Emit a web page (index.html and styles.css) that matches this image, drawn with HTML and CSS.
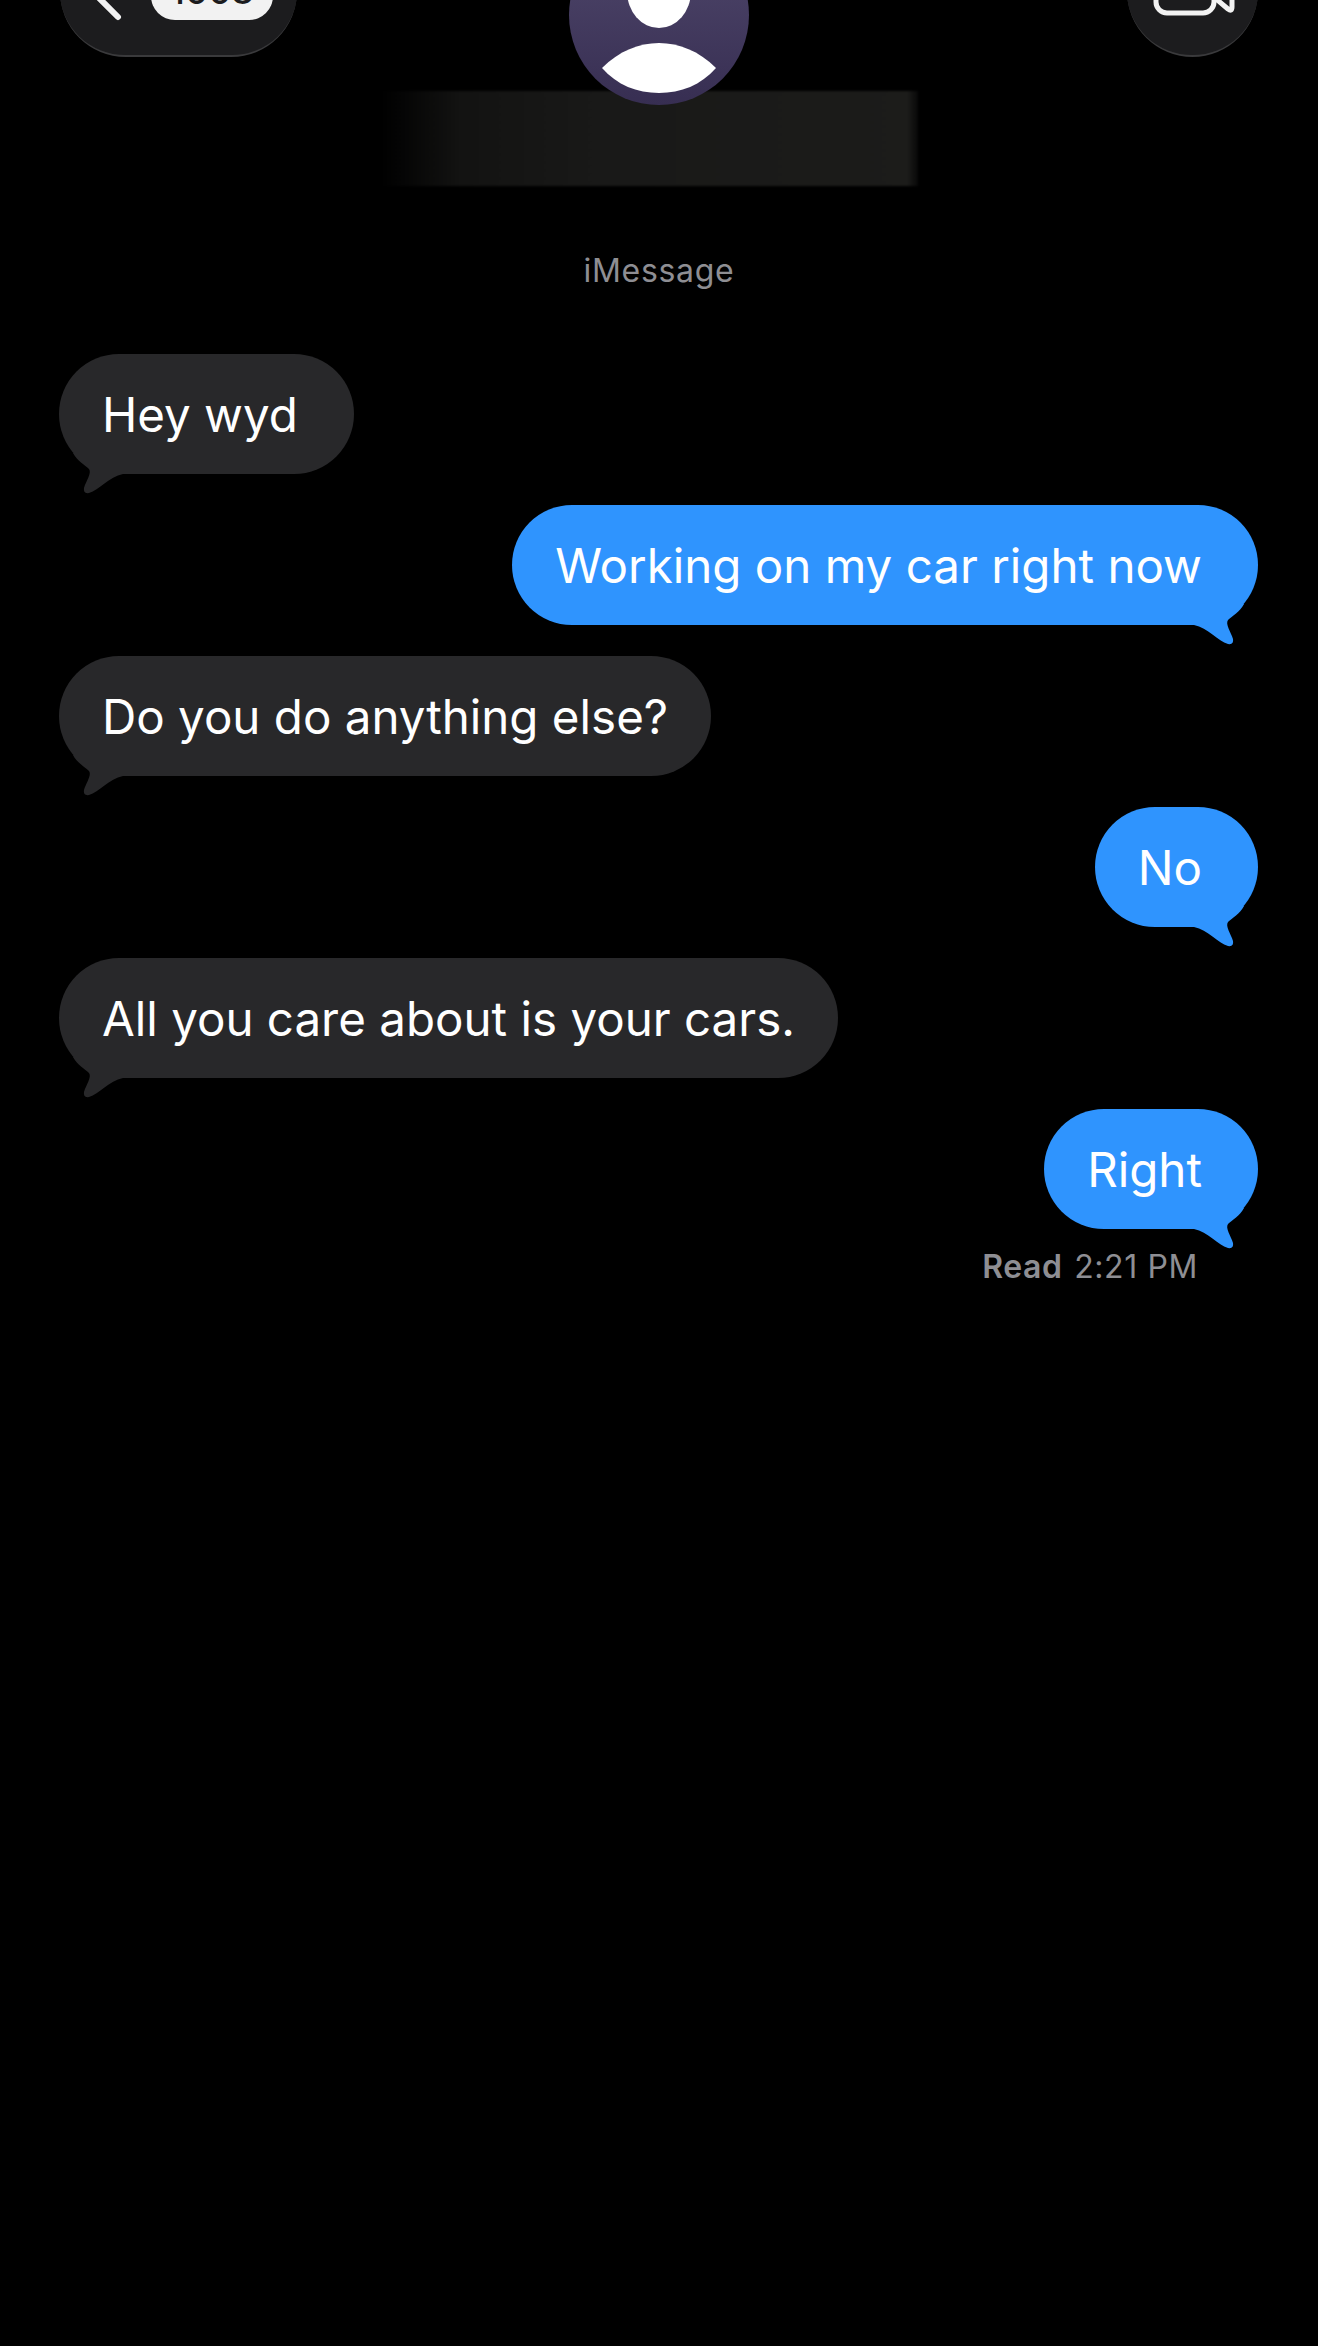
FILE: index.html
```html
<!DOCTYPE html>
<html lang="en">
<head>
    <meta charset="UTF-8">
    <meta name="viewport" content="width=device-width, initial-scale=1.0">
    <title>Messages</title>
    <link rel="stylesheet" href="styles.css">
</head>
<body>
    <svg class="defs" width="0" height="0">
        <symbol id="tail" viewBox="0 0 64 42">
            <path d="M14 0C18 8 26 12 30 16C33 20 27 28 25 35Q24 41 30 40C40 37 50 24 64 21V0Z"/>
        </symbol>
    </svg>

    <!-- Top bar, cut off by the top of the screen -->
    <header class="top-bar">
        <div class="back-pill">
            <svg class="chevron" width="40" height="64" viewBox="0 0 40 64">
                <path d="M34 6L8 32L34 58"/>
            </svg>
            <span class="badge">1008</span>
        </div>
        <div class="contact">
            <div class="avatar">
                <svg width="180" height="180" viewBox="0 0 180 180">
                    <ellipse cx="90" cy="66" rx="32" ry="37"/>
                    <path d="M33 143C50 126 70 118 90 118C110 118 130 126 147 143C132 160 112 168 90 168C68 168 48 160 33 143Z"/>
                </svg>
            </div>
            <div class="name-blur"></div>
        </div>
        <div class="video-btn">
            <svg class="camera" width="84" height="50" viewBox="0 0 84 50">
                <rect x="5" y="5" width="58" height="42" rx="11"/>
                <path d="M64 32L77 43Q81 46 81 41V8Q81 3 77 6L64 18"/>
            </svg>
        </div>
    </header>

    <div class="service">iMessage</div>

    <!-- Conversation -->
    <main class="thread">
        <div class="bubble in">Hey wyd&nbsp;<svg class="tail"><use href="#tail"/></svg></div>
        <div class="bubble out">Working on my car right now<svg class="tail"><use href="#tail"/></svg></div>
        <div class="bubble in">Do you do anything else?<svg class="tail"><use href="#tail"/></svg></div>
        <div class="bubble out">No<svg class="tail"><use href="#tail"/></svg></div>
        <div class="bubble in">All you care about is your cars.<svg class="tail"><use href="#tail"/></svg></div>
        <div class="bubble out">Right<svg class="tail"><use href="#tail"/></svg></div>
        <div class="receipt"><strong>Read</strong> 2:21 PM</div>
    </main>
</body>
</html>
```

FILE: styles.css
```css
html, body {
    height: 100%;
    overflow: hidden;
}
body {
    margin: 0;
    font-family: Inter, "Liberation Sans", sans-serif;
    background-color: #000;
    color: #fff;
}
.defs {
    display: block;
}
.top-bar {
    display: grid;
    grid-template-columns: 1fr auto 1fr;
    align-items: start;
    height: 186px;
    padding: 0 60px;
}
.back-pill {
    display: flex;
    align-items: center;
    justify-self: start;
    box-sizing: border-box;
    width: 237px;
    height: 131px;
    margin-top: -74px;
    padding-left: 24px;
    background: #1c1c1e;
    border-bottom: 2px solid #3a3a3c;
    border-radius: 66px;
}
.chevron path {
    fill: none;
    stroke: #f2f2f2;
    stroke-width: 6;
    stroke-linecap: round;
    stroke-linejoin: round;
}
.badge {
    width: 122px;
    height: 58px;
    margin-left: 27px;
    background: #f2f2f2;
    border-radius: 24px;
    color: #1c1c1e;
    font-size: 36px;
    font-weight: 500;
    line-height: 58px;
    text-align: center;
}
.contact {
    display: flex;
    flex-direction: column;
    align-items: center;
    width: 560px;
}
.avatar {
    position: relative;
    z-index: 1;
    width: 180px;
    height: 180px;
    margin-top: -75px;
    background: linear-gradient(#51496d, #372e52);
    border-radius: 50%;
}
.avatar svg {
    display: block;
    fill: #fff;
}
.name-blur {
    width: 537px;
    height: 95px;
    margin: -14px 20px 0 0;
    background: linear-gradient(90deg, #000, #131312 15%, #191918 40%, #1c1c1a 98%, #080808);
    filter: blur(1px);
}
.video-btn {
    display: flex;
    align-items: center;
    justify-content: center;
    justify-self: end;
    box-sizing: border-box;
    width: 131px;
    height: 131px;
    margin-top: -74px;
    background: #1c1c1e;
    border-bottom: 2px solid #3a3a3c;
    border-radius: 50%;
}
.camera {
    fill: none;
    stroke: #f2f2f2;
    stroke-width: 5;
    stroke-linejoin: round;
}
.service {
    margin-top: 66px;
    color: #8e8e93;
    font-size: 32px;
    letter-spacing: 0.7px;
    line-height: 38px;
    text-align: center;
}
.thread {
    display: flex;
    flex-direction: column;
    gap: 31px;
    margin-top: 64px;
    padding: 0 60px 0 59px;
}
.bubble {
    position: relative;
    height: 120px;
    border-radius: 60px;
    font-size: 47.5px;
    line-height: 122px;
    white-space: pre;
}
.in {
    align-self: flex-start;
    padding: 0 43px;
    background: #28282a;
}
.out {
    align-self: flex-end;
    padding: 0 56px 0 43px;
    background: #2f94fe;
}
.tail {
    position: absolute;
    bottom: -21px;
    width: 64px;
    height: 42px;
}
.in .tail {
    left: 0;
    fill: #28282a;
}
.out .tail {
    right: 0;
    fill: #2f94fe;
    transform: scaleX(-1);
}
.receipt {
    align-self: flex-end;
    margin: -12px 60px 0 0;
    color: #8e8e93;
    font-size: 32px;
    letter-spacing: 0.6px;
    line-height: 38px;
}
.receipt strong {
    font-weight: 600;
    margin-right: 2px;
}
```
